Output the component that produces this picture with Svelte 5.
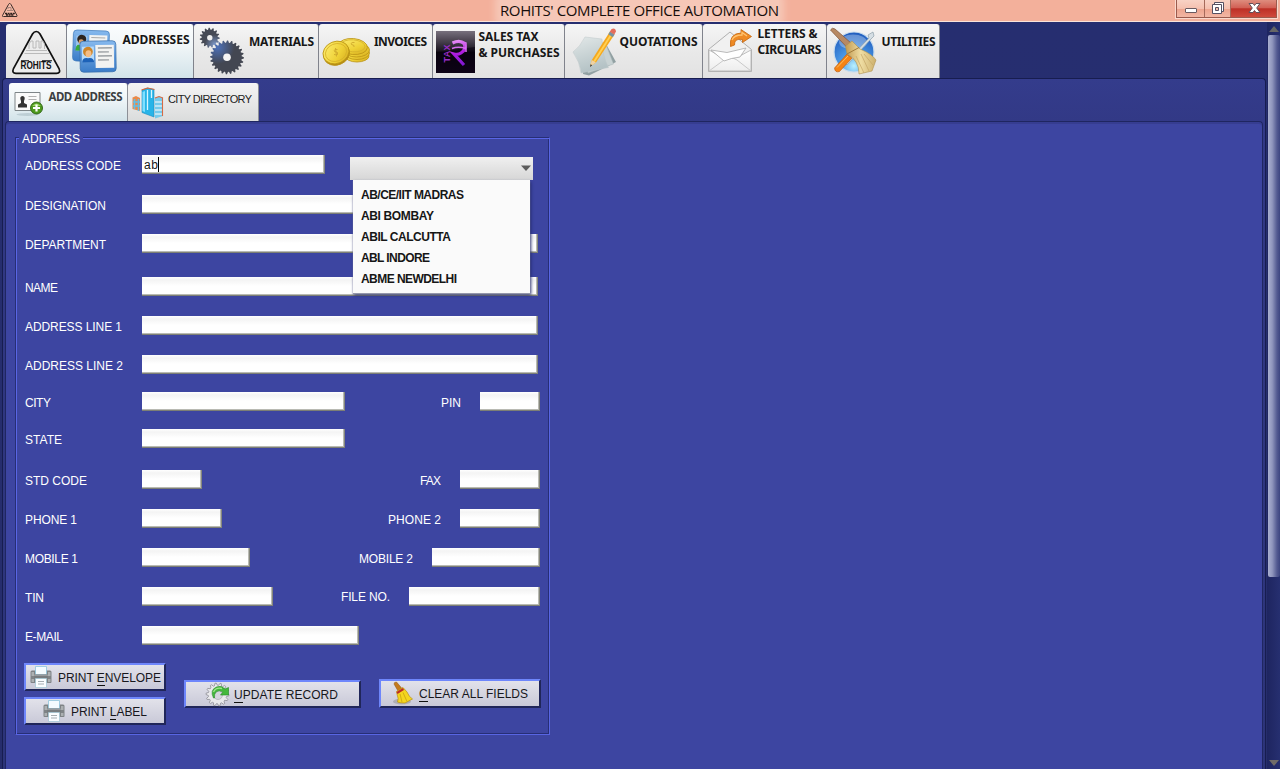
<script>
  const tabs = [
    { id: 'logo', x: 6, w: 61, icon: 61, lines: [] },
    { id: 'cards', x: 67, w: 127, icon: 55.5, top: 8, lines: [['ADDRESSES', 67]], active: true },
    { id: 'gears', x: 194, w: 125, icon: 55, top: 10, lines: [['MATERIALS', 65]] },
    { id: 'coins', x: 319, w: 114, icon: 55, top: 10, lines: [['INVOICES', 53]] },
    { id: 'tax', x: 433, w: 132, icon: 45.5, top: 5, lines: [['SALES TAX', 60], ['& PURCHASES', 81]] },
    { id: 'paper', x: 565, w: 138, icon: 54.5, top: 10, lines: [['QUOTATIONS', 78]] },
    { id: 'letter', x: 703, w: 124, icon: 54.5, top: 2, lines: [['LETTERS &', 60], ['CIRCULARS', 64]] },
    { id: 'tools', x: 827, w: 113, icon: 54.5, top: 10, lines: [['UTILITIES', 54]] }
  ];

  const rows = [
    { h: 40, label: 'ADDRESS CODE', lw: 96, w: 183, value: 'ab' },
    { h: 39, label: 'DESIGNATION', lw: 81, w: 383 },
    { h: 43, label: 'DEPARTMENT', lw: 81, w: 396 },
    { h: 39, label: 'NAME', lw: 33, w: 396 },
    { h: 39, label: 'ADDRESS LINE 1', lw: 97, w: 396 },
    { h: 37, label: 'ADDRESS LINE 2', lw: 98, w: 396 },
    { h: 37, label: 'CITY', lw: 26, w: 203, label2: 'PIN', lw2: 20, w2: 60 },
    { h: 41, label: 'STATE', lw: 37, w: 203 },
    { h: 39, label: 'STD CODE', lw: 62, w: 60, label2: 'FAX', lw2: 21, w2: 80 },
    { h: 39, label: 'PHONE 1', lw: 52, w: 80, label2: 'PHONE 2', lw2: 53, w2: 80 },
    { h: 39, label: 'MOBILE 1', lw: 53, w: 108, label2: 'MOBILE 2', lw2: 54, w2: 108 },
    { h: 39, label: 'TIN', lw: 19, w: 131, label2: 'FILE NO.', lw2: 49, w2: 131, raised: true },
    { h: 37, label: 'E-MAIL', lw: 38, w: 217 }
  ];

  const options = [['AB/CE/IIT MADRAS', 103], ['ABI BOMBAY', 73], ['ABIL CALCUTTA', 90], ['ABL INDORE', 69], ['ABME NEWDELHI', 96]];

  // Spread the letters so that the text fills the given width.
  function fit(node, width) {
    const natural = node.getBoundingClientRect().width;
    const n = node.textContent.length;
    node.style.letterSpacing = (width - natural) / (n - 1) + 'px';
    node.style.marginRight = -(width - natural) / (n - 1) + 'px';
  }

  function gear(cx, cy, r, teeth, depth) {
    let d = '';
    for (let i = 0; i < teeth * 4; i++) {
      const a = (i / (teeth * 4)) * Math.PI * 2;
      const rr = i % 4 < 2 ? r : r - depth;
      d += (i ? 'L' : 'M') + (cx + rr * Math.cos(a)).toFixed(2) + ' ' + (cy + rr * Math.sin(a)).toFixed(2);
    }
    return d + 'Z';
  }
</script>

{#snippet printer()}
  <svg class="printer" width="22" height="22" viewBox="0 0 22 22">
    <path d="M.5 6Q.5 4.500 2 4.500H20Q21.500 4.500 21.500 6V16Q21.500 17 20.500 17H1.500Q.5 17 .5 16Z" fill="#7f8386" />
    <path d="M1.500 6H4V10H1.500ZM18 6H20.500V10H18ZM1.500 13H4V16H1.500ZM18 13H20.500V16H18Z" fill="#acb0b2" />
    <path d="M5.500 .5H16.500V8.500H5.500Z" fill="#f4fbff" stroke="#8ec4dc" stroke-width=".8" />
    <path d="M4 8.500H18V12.500H4Z" fill="#777c7f" /><path d="M4 9.200H18" stroke="#a5a9ab" />
    <path d="M5.500 12.500H16.500V21.500H5.500Z" fill="#fafdff" stroke="#9fc5d6" stroke-width=".7" />
    <path d="M8 15.500H14M8 18H14" stroke="#a6adb2" stroke-width="1" />
  </svg>
{/snippet}

<div class="window">
  <header>
    <svg class="mini" width="18" height="18" viewBox="0 0 18 18">
      <path d="M8.500 2.500Q9.500 2.500 10 3.500L16 14.500Q16.500 15.500 15 15.500H2.500Q1 15.500 1.500 14.500L7.500 3.500Q8 2.500 8.500 2.500Z" fill="#f7bba7" stroke="#3b2b28" stroke-width="1" />
      <path d="M7 8V6.500H10V9M6 9.500H12" fill="none" stroke="#a98479" />
      <path d="M4 12.500H14M5 14H13" stroke="#30201d" stroke-width="1.300" stroke-dasharray="2 .6" />
    </svg>
    <div class="title"><span use:fit={279}>ROHITS' COMPLETE OFFICE AUTOMATION</span></div>
    <div class="controls">
      <div class="ctl min"><svg width="27" height="17" viewBox="0 0 27 17"><rect x="8.500" y="8.500" width="11" height="4" rx=".5" fill="#fff" stroke="#6a5a60" /></svg></div>
      <div class="ctl max"><svg width="25" height="17" viewBox="0 0 25 17"><path d="M9.500 2.500H18.500V11.500H9.500Z" fill="#fff" stroke="#565062" /><path d="M7.500 4.500H16.500V13.500H7.500Z" fill="#fff" stroke="#565062" /><path d="M10.500 7.500H13.500V10.500H10.500Z" fill="#f0c0b0" stroke="#565062" /></svg></div>
      <div class="ctl close"><svg width="45" height="17" viewBox="0 0 45 17"><path d="M18 3.500H22L23.500 5.500L25 3.500H29L25.700 8L29 12.500H25L23.500 10.500L22 12.500H18L21.300 8Z" fill="#fff" stroke="#65505a" stroke-width="1" /></svg></div>
    </div>
  </header>

  <div class="body">
    <div class="main">
      <nav class="tabs">
        {#each tabs as t}
          <div class="tab" class:active={t.active} style="width:{t.w}px">
            <svg class="icon" width={t.icon} height="54" viewBox="{t.x} 24 {t.icon} 54">
              {#if t.id === 'logo'}
                <path d="M36.300 31.500Q38.500 31.500 40 34L59 68.500Q61 73.300 56.500 73.300H16Q11.500 73.300 13.500 68.500L32.500 34Q34 31.500 36.300 31.500Z" fill="#ececec" stroke="#111" stroke-width="1.700" />
                <path d="M29 49V44L31 41H33V48H36V41H39V48H41V41H43L44.500 44V49M26 50.500H47M24.500 53.500H49" fill="none" stroke="#b4b4b4" stroke-width=".9" />
                <text x="20.500" y="69.300" font-family="Liberation Sans" font-weight="700" font-size="10" textLength="31" lengthAdjust="spacingAndGlyphs" fill="#111">ROHITS</text>
                <path d="M21 60.800H29M42 60.800H52" stroke="#111" stroke-width="1.100" />
              {:else if t.id === 'cards'}
                <defs>
                  <linearGradient id="card" x1="0" y1="0" x2="0" y2="1"><stop offset="0" stop-color="#86b9ee" /><stop offset="1" stop-color="#3a7cc8" /></linearGradient>
                </defs>
                <g transform="rotate(2 91 46)">
                  <rect x="73" y="30.500" width="36" height="31" rx="3.500" fill="url(#card)" stroke="#3d78b8" stroke-width=".7" />
                  <path d="M89 35H107V46H89Z" fill="#f2f3f3" /><path d="M91 37.500H105" stroke="#aaa" stroke-width="1.200" />
                  <rect x="76" y="36" width="11" height="15" fill="#9cc4ec" /><circle cx="81.500" cy="39.500" r="4.500" fill="#2b2420" /><circle cx="81" cy="42" r="2.500" fill="#d79c67" /><path d="M75.500 51Q76 44 80 45.500L82 51Z" fill="#39a83a" />
                </g>
                <g transform="rotate(-1 98 56)">
                  <rect x="80" y="41" width="36" height="31" rx="3.500" fill="url(#card)" stroke="#356ba8" stroke-width=".7" />
                  <path d="M95.500 45H114V68H95.500Z" fill="#f3f3f1" />
                  <path d="M98 48H112M98 52H109M98 56H112M98 60H109" stroke="#9ca0a3" stroke-width="1.300" />
                  <path d="M82 46.500H94V62.500H82Z" fill="#b6dbfa" />
                  <circle cx="88" cy="51.500" r="4.900" fill="#cf862a" /><ellipse cx="88.500" cy="53.500" rx="3" ry="3.500" fill="#f4bd85" /><path d="M82 62.500Q82 57 88 58Q94 57 94 62.500Z" fill="#1d62b8" />
                </g>
              {:else if t.id === 'gears'}
                <defs>
                  <radialGradient id="g1" cx=".22" cy=".2" r=".5"><stop offset="0" stop-color="#4c70b8" /><stop offset="1" stop-color="#434752" /></radialGradient>
                  <radialGradient id="g2" cx=".75" cy=".85" r=".5"><stop offset="0" stop-color="#7c98ca" /><stop offset="1" stop-color="#464a55" /></radialGradient>
                </defs>
                <path d={gear(209.700, 37.700, 10, 15, 2)} fill="url(#g2)" /><circle cx="209.800" cy="37.800" r="2.700" fill="#eee" />
                <path d={gear(227, 57.300, 16.900, 24, 2.200)} fill="url(#g1)" /><circle cx="227" cy="57.300" r="3.800" fill="#f4f4f4" />
              {:else if t.id === 'coins'}
                <defs><linearGradient id="coin" x1="0" y1="0" x2="1" y2="1"><stop offset="0" stop-color="#fff178" /><stop offset=".6" stop-color="#eed035" /><stop offset="1" stop-color="#d3a81c" /></linearGradient></defs>
                <g stroke="#bb9414" stroke-width=".8" fill="url(#coin)">
                  <ellipse cx="357" cy="56" rx="12" ry="6" /><ellipse cx="357" cy="53" rx="12.500" ry="6.500" /><ellipse cx="356.500" cy="50" rx="13" ry="7" />
                  <ellipse cx="353" cy="46.500" rx="14.500" ry="8" transform="rotate(5 353 46)" />
                  <ellipse cx="353" cy="45.800" rx="12" ry="6" transform="rotate(5 353 46)" fill="none" stroke="#d6b22a" />
                  <ellipse cx="336.500" cy="54" rx="13.300" ry="11" transform="rotate(-22 336.500 54)" fill="#b48a17" />
                  <ellipse cx="336" cy="52.500" rx="13.300" ry="11" transform="rotate(-22 336 52.500)" />
                  <ellipse cx="336" cy="52.500" rx="10.800" ry="8.700" transform="rotate(-22 336 52.500)" fill="none" stroke="#d6b22a" />
                </g>
                <path d="M337.500 49.500Q333.500 49 334.500 51.500Q339 52 337.500 54.500Q335.500 55 334 54.500M335.500 48L336.500 56.500M354.500 42.500Q350.500 42 351.500 44.500Q355 45 354 47" fill="none" stroke="#cda72b" stroke-width=".9" />
              {:else if t.id === 'tax'}
                <defs>
                  <linearGradient id="tx" x1="0" y1="0" x2="0" y2="1"><stop offset="0" stop-color="#77707d" /><stop offset=".48" stop-color="#1a141f" /><stop offset=".5" stop-color="#07030b" /><stop offset="1" stop-color="#16051f" /></linearGradient>
                  <linearGradient id="rp" gradientUnits="userSpaceOnUse" x1="455" y1="41" x2="460" y2="66"><stop offset="0" stop-color="#e58cf4" /><stop offset=".45" stop-color="#b21de0" /><stop offset="1" stop-color="#7e18d0" /></linearGradient>
                </defs>
                <rect x="436" y="31" width="39" height="42" fill="url(#tx)" />
                <path d="M436 53Q456 49 475 47V73H436Z" fill="#080211" opacity=".6" />
                <text transform="translate(450 62.500) rotate(-90)" font-family="Liberation Sans" font-weight="700" font-size="9" fill="#9a2cc8" textLength="18">TAX</text>
                <path d="M452.500 43Q460 39.500 464 43.500Q467 49 461 53Q458 55 454 54L464 65" fill="none" stroke="url(#rp)" stroke-width="3.200" />
                <path d="M452 48.500Q458 46 466 48.500M462 41.500L466 43V52" fill="none" stroke="#d86cf0" stroke-width="1.500" />
              {:else if t.id === 'paper'}
                <defs>
                  <linearGradient id="pp" x1="0" y1="0" x2=".3" y2="1"><stop offset="0" stop-color="#e2e8e8" /><stop offset="1" stop-color="#b4c2c5" /></linearGradient>
                </defs>
                <path d="M583 52L606 44L616 62L604 68L589 75.500L583 74Z" fill="#91a0a2" /><path d="M585 48L605 42L613.500 64L588 73Z" fill="#c8d2d3" stroke="#aab6b8" stroke-width=".5" />
                <path d="M573 52Q580 47 585 37L602 39Q602 55 608.500 67.500L581 73Q580 62 573 52Z" fill="url(#pp)" stroke="#bcc7c9" stroke-width=".5" />
                <path d="M590 66.500L591.800 60L610 31.500L614.500 34.500L596 62.500Z" fill="#f6a81c" />
                <path d="M593.300 61L611.500 32.500L613 33.500L595 62Z" fill="#ffd054" />
                <path d="M610 31.500L614.500 34.500L612.800 37.200L608.300 34.200Z" fill="#7792a2" />
                <path d="M609.800 31.800L611.600 29Q615.500 27.500 616 31.500L614.300 34.500Z" fill="#e46d5c" />
                <path d="M590 66.500L591.800 60L596 62.500Z" fill="#edd2a6" /><path d="M590 67L590.600 64.300L592.200 65.200Z" fill="#333" />
              {:else if t.id === 'letter'}
                <defs><linearGradient id="env" x1="0" y1="0" x2="0" y2="1"><stop offset="0" stop-color="#fff" /><stop offset="1" stop-color="#ededed" /></linearGradient></defs>
                <path d="M708.500 49.500L730 32L751.500 49.500V71.500H708.500Z" fill="#f1f1f1" stroke="#b0b0b0" />
                <path d="M709 50L725 59Q731 54 738 57L751 50V71H709Z" fill="url(#env)" stroke="#b8b8b8" stroke-width=".9" />
                <path d="M709 71L724 60Q731 56 737 60L751 71" fill="none" stroke="#c9c9c9" />
                <path d="M711 50L727 52.500L746 48L740 57Q731 58 724 61Z" fill="#fff" stroke="#a9a9a9" stroke-width=".8" />
                <path d="M730.500 46.500Q729 33.500 741 33V29.500L751.500 36.500L742.500 42.500V39.500Q734 38 734.500 45Z" fill="#ee8a25" stroke="#c7660c" stroke-width=".8" /><path d="M732 40Q734 35 742 35V32.500L747 36" fill="none" stroke="#ffc370" stroke-width="1.300" />
              {:else}
                <defs>
                  <radialGradient id="globe" cx=".5" cy=".85" r=".8"><stop offset="0" stop-color="#b8f0ff" /><stop offset=".45" stop-color="#4a99e6" /><stop offset="1" stop-color="#2360c0" /></radialGradient>
                  <linearGradient id="straw" x1="0" y1="0" x2="1" y2="0"><stop offset="0" stop-color="#c29a50" /><stop offset=".5" stop-color="#efdda3" /><stop offset="1" stop-color="#cdb06c" /></linearGradient>
                </defs>
                <circle cx="854" cy="52" r="20" fill="url(#globe)" stroke="#c8dcee" stroke-width="1.200" /><ellipse cx="853" cy="42" rx="14" ry="7.500" fill="#fff" opacity=".3" />
                <path d="M845 63L869 38L868 35L873 32L874 36L871 39L847 65Z" fill="#d5dee4" stroke="#8d9fab" stroke-width=".7" />
                <path d="M834.500 68L847 54L852 58L839.500 71.500Q835 73 834.500 68Z" fill="#f58314" stroke="#b9570b" stroke-width=".6" /><path d="M837 67.500L848 56" stroke="#ffc05c" />
                <path d="M830.500 30Q832 27 835 29L851 43L847.500 48Z" fill="#b78963" stroke="#815438" stroke-width=".7" />
                <path d="M845.500 46L852 41L860 49Q872 54 876 60L872 71L859 74Q859 60 847 54Z" fill="url(#straw)" stroke="#b0924f" stroke-width=".6" />
                <path d="M847 54L859 47.500" stroke="#a07a3c" stroke-width="1" /><path d="M856 56L864 73M861 54L869 71M864 54L873 65" stroke="#c3a566" stroke-width=".7" />
              {/if}
            </svg>
            <div class="caption" style="padding-top:{t.top}px">
              {#each t.lines as [s, w]}<div><span use:fit={w}>{s}</span></div>{/each}
            </div>
          </div>
        {/each}
      </nav>

      <div class="outer">
        <nav class="subtabs">
          <div class="sub on">
            <svg width="38.500" height="38" viewBox="9.500 83 38.500 38">
              <ellipse cx="28" cy="114.500" rx="11" ry="1.500" fill="#9fb3bb" opacity=".5" />
              <path d="M15.500 92.500H40.500V110.500H15.500Z" fill="#fafafa" stroke="#7e8588" />
              <path d="M18.500 107.500V104.500L21.500 103V101Q19.500 96.500 23 96Q26.500 96.500 24.500 101V103L27.500 104.500V107.500Z" fill="#333" />
              <path d="M29 96.500H37M29 99.500H37M33 104H37" stroke="#b0b0b0" />
              <circle cx="37" cy="108" r="6" fill="#4e9a1e" stroke="#29610e" stroke-width=".9" /><path d="M32.500 106Q37 101 41.500 106Z" fill="#99d062" /><path d="M37 104.500V111.500M33.500 108H40.500" stroke="#fff" stroke-width="2.200" />
            </svg>
            <div class="caption subcap"><span use:fit={74}>ADD ADDRESS</span></div>
          </div>
          <div class="sub">
            <svg width="40" height="38" viewBox="128 83 40 38">
              <path d="M132.500 97.500L136 96L140 98V111L132.500 109Z" fill="#e98a4a" /><path d="M134.500 99V109M138.500 99V111M133 102H140M133 106H140" stroke="#60bfe9" stroke-width="1.500" />
              <path d="M142 90L147.500 88L154 89.500V117L142 112.500Z" fill="#28b4e8" stroke="#1b89bd" stroke-width=".6" /><path d="M142.500 92L145 91V112L142.500 111Z" fill="#7fe0ff" /><path d="M147.500 90V110M151.500 90V98" fill="none" stroke="#d8f6ff" stroke-width="1.300" /><path d="M141.500 90L147.500 88L154.500 89.500" fill="none" stroke="#db6737" stroke-width="1.200" />
              <path d="M155 98L159 96.500L163 98V116L155 118.500Z" fill="#75cbed" /><path d="M155 102H163M155 106H163M155 110H163M155 114H163" stroke="#fff" stroke-width="1.200" /><path d="M162.500 98V116M155 98L159 96.500L163 98" fill="none" stroke="#d56a45" stroke-width="1.100" />
            </svg>
            <div class="subcap plain"><span use:fit={84}>CITY DIRECTORY</span></div>
          </div>
        </nav>

        <div class="inner">
          <section class="group">
            <div class="legend"><span use:fit={58}>ADDRESS</span></div>
            <div class="rows">
              {#each rows as r, i}
                <div class="row" style="height:{r.h}px">
                  <div class="label"><span use:fit={r.lw}>{r.label}</span></div>
                  <div class="field" style="width:{r.w}px">{#if r.value}<span use:fit={14}>{r.value}</span><i class="caret"></i>{/if}</div>
                  {#if r.label2}
                    <div class="label second" class:raised={r.raised}><span use:fit={r.lw2}>{r.label2}</span></div>
                    <div class="field" style="width:{r.w2}px"></div>
                  {/if}
                  {#if i === 0}
                    <div class="combo">
                      <svg width="12" height="7" viewBox="0 0 12 7"><path d="M1 .5H11L6 6Z" fill="#5c5c5c" /></svg>
                      <div class="menu">
                        {#each options as [s, w]}<div class="option"><span use:fit={w}>{s}</span></div>{/each}
                      </div>
                    </div>
                  {/if}
                </div>
              {/each}
            </div>
            <div class="actions">
              <div class="stack">
                <div class="btn env">{@render printer()}<span use:fit={103}>PRINT <u>E</u>NVELOPE</span></div>
                <div class="btn lab">{@render printer()}<span use:fit={76}>PRINT <u>L</u>ABEL</span></div>
              </div>
              <div class="btn update">
                <svg width="25" height="25" viewBox="0 0 25 25">
                  <path d={gear(12.500, 12.500, 11.500, 14, 2.300)} fill="#e9e9ec" stroke="#8d8d94" stroke-width=".8" /><circle cx="13" cy="13" r="4.500" fill="#d4d4dc" stroke="#a4a4aa" stroke-width=".6" />
                  <path d="M8.500 16Q4.500 8 11.500 5Q16.500 3 20 7L23.500 5.500V13H15.500L18 10Q14 7.500 11 10Q9 12 9.500 16Z" fill="#45b83c" stroke="#238a25" stroke-width=".6" /><path d="M8.500 10Q11 5 17 6.500" fill="none" stroke="#a0e58b" stroke-width="1.300" />
                </svg>
                <span use:fit={104}><u>U</u>PDATE RECORD</span>
              </div>
              <div class="btn clear">
                <svg width="22" height="25" viewBox="0 0 22 25">
                  <ellipse cx="10" cy="20.500" rx="9" ry="3" fill="#888" opacity=".45" />
                  <path d="M2 3Q2 1 4.500 1L10 7.500L6 10Z" fill="#c47a1d" stroke="#8e5415" stroke-width=".5" />
                  <path d="M4.500 10.500L11 6.500L15 11Q17 16 20.500 18L13 22Q7 22 5.500 21Q7 18 5 13Z" fill="#f4d51e" stroke="#b98f10" stroke-width=".7" />
                  <path d="M4.500 11L11 7L12 9L5.500 13Z" fill="#bd2c28" /><path d="M8 13L10 21M11 11.500L15 20.500" stroke="#c9a013" stroke-width=".8" />
                </svg>
                <span use:fit={109}><u>C</u>LEAR ALL FIELDS</span>
              </div>
            </div>
          </section>
        </div>
      </div>
    </div>

    <aside class="scroll">
      <svg width="10" height="6" viewBox="0 0 10 6"><path d="M5 0L10 6H0Z" fill="#666" /></svg>
      <div class="thumb"></div>
      <svg class="down" width="10" height="6" viewBox="0 0 10 6"><path d="M0 0H10L5 6Z" fill="#706c68" /></svg>
    </aside>
  </div>
</div>

<style>
  :global(body) { margin: 0; overflow: hidden; }
  .window { width: 1280px; height: 769px; overflow: hidden; display: flex; flex-direction: column; background: #262e6e; font-family: "Liberation Sans", Arial, sans-serif; font-size: 12px; }
  span { display: inline-block; white-space: pre; }
  svg { flex: none; display: block; }
  u { text-decoration: none; box-shadow: 0 1px 0 #111; display: inline-block; line-height: 13px; }

  header { height: 22px; flex: none; box-sizing: border-box; border-bottom: 1px solid #fbe3da; background: #f3b09b; display: flex; align-items: flex-start; }
  .mini { width: 18px; margin: 1px 0 0 1px; }
  .title { flex: 1; padding-left: 481px; height: 21px; overflow: hidden; font: 15px/21px "Open Sans", "Noto Sans", sans-serif; color: #170e0b; }
  .title span { background: #f6c7b7; box-shadow: 0 0 7px 5px #f6c7b7; height: 20px; }
  .controls { display: flex; height: 18px; box-sizing: border-box; border: 1px solid #9a5b4d; border-top: 0; box-shadow: 0 0 0 1px #fad9cd; margin-right: 3px; background: #f2b7a5; }
  .ctl { height: 17px; }
  .min, .max { background: linear-gradient(#f8d2c5, #f5c0af 50%, #eda38d 52%, #f2b7a4); border-right: 1px solid #a56a5b; }
  .close { background: linear-gradient(#de8d7e, #d26155 45%, #bd3026 52%, #cf4b3c); }

  .body { flex: 1; display: flex; min-height: 0; }
  .main { width: 1267px; display: flex; flex-direction: column; background: linear-gradient(#262e70, #262d6c); }
  .tabs { display: flex; padding: 2px 0 0 6px; }
  .tab { height: 54px; display: flex; box-sizing: border-box; background: linear-gradient(#f5f5f5, #e9e9e9 50%, #e2e2e2); border-right: 1px solid #80838c; border-radius: 3px 3px 0 0; }
  .tab.active { background: linear-gradient(#fbfdfe, #f1f6f8 40%, #d2e3e9); }
  .caption { font: 700 12px/16px "Noto Sans", sans-serif; color: #171717; }
  .caption div { height: 16px; }

  .outer { flex: 1; margin-left: 2px; padding: 4px 2px 0 2px; box-sizing: border-box; width: 1264px; border: 1px solid #171d50; border-bottom: 0; border-radius: 4px 4px 0 0; background: linear-gradient(#343c8c, #323986 42px, #2c3479); display: flex; flex-direction: column; }
  .subtabs { display: flex; padding-left: 4px; }
  .sub { display: flex; height: 38px; width: 131px; box-sizing: border-box; border-right: 1px solid #8d9097; border-radius: 3px 3px 0 0; background: linear-gradient(#f4f4f4, #e8e8e8 50%, #dadcdc); }
  .sub.on { width: 119px; background: linear-gradient(#fbfdfe, #f0f6f8 40%, #d2e3e9); }
  .subcap { padding: 6px 0 0 1px; color: #3b3f42; font-size: 11.500px; }
  .plain { font-size: 11px; line-height: 20px; color: #222; padding-left: 0; }
  .inner { flex: 1; border: 1px solid #1f2661; border-bottom: 0; border-radius: 4px 4px 0 0; background: #3d45a1; box-shadow: inset 0 2px 0 #363d91; padding: 15px 0 0 9px; }

  .group { position: relative; width: 535px; height: 598px; box-sizing: border-box; border: 1px solid #272e76; border-right-color: #5865e3; border-bottom-color: #5865e3; box-shadow: inset 1px 1px 0 #5966e6, inset -1px -1px 0 #272e76; padding: 17px 0 0 9px; }
  .legend { position: absolute; left: 3px; top: -7px; height: 16px; padding: 0 3px; line-height: 16px; background: #3d45a1; color: #fff; }
  .rows { width: 515px; }
  .row { display: flex; align-items: flex-start; position: relative; }
  .label { width: 117px; flex: none; line-height: 23px; height: 19px; color: #fff; }
  .label.second { width: auto; margin-left: auto; margin-right: 19px; }
  .label.raised { line-height: 21px; }
  .field { flex: none; height: 19px; box-sizing: border-box; background: linear-gradient(#fff, #f4f4f4 3px, #fff 9px); border-bottom: 1px solid #7d7f75; border-right: 1px solid #85867c; box-shadow: inset -1px -1px 0 #b9bab3; color: #161616; line-height: 20px; padding-left: 2px; display: flex; }
  .caret { width: 1px; height: 15px; background: #000; margin: 2px 0 0 0; }

  .combo { margin-left: 25px; margin-top: 2px; width: 183px; height: 23px; position: relative; background: linear-gradient(#f0f0f0, #d6d6d6); display: flex; justify-content: flex-end; align-items: center; box-sizing: border-box; padding-right: 1px; }
  .menu { position: absolute; z-index: 2; left: 3px; top: 23px; width: 177px; height: 113px; box-sizing: border-box; padding: 4px 0 0 8px; background: #fafafa; box-shadow: 0 1px 1px #9497ab, 1px 2px 3px #22286a; }
  .option { height: 21px; line-height: 22px; font-weight: 700; font-size: 12px; color: #161616; }

  .actions { display: flex; align-items: flex-start; }
  .stack { display: flex; flex-direction: column; gap: 6px; width: 142px; margin-left: -1px; }
  .btn { height: 28px; box-sizing: border-box; border: 2px solid #202659; border-top-color: #6e86fb; border-left-color: #6e86fb; background: linear-gradient(#e2e2ea, #c9c9d8); display: flex; align-items: center; color: #17171c; }
  .btn span { margin-top: 1px; }
  .env { padding-left: 4px; gap: 6px; }
  .lab { padding-left: 17px; gap: 6px; }
  .update { width: 177px; margin: 17px 0 0 18px; padding-left: 19px; gap: 4px; }
  .clear { width: 162px; margin: 16px 0 0 18px; padding-left: 11px; gap: 5px; height: 29px; }

  .scroll { width: 13px; display: flex; flex-direction: column; align-items: center; padding-top: 4px; box-sizing: border-box; background: linear-gradient(90deg, #1e2560, #262f70); }
  .thumb { width: 12px; height: 542px; margin-top: 3px; border-radius: 2px; background: linear-gradient(90deg, #a9afd0, #9096bd 35%, #535a91 75%, #3d4580); }
  .down { margin-top: auto; margin-bottom: 3px; }
</style>
